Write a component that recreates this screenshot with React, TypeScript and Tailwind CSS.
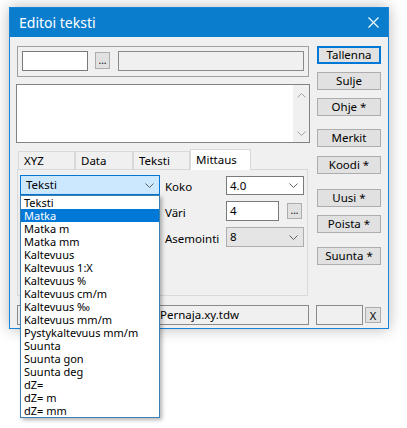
// Editoi teksti – dialog with dropdown open
const FONT = "font-['Noto_Sans',sans-serif]";

const listItems = [
    "Teksti",
    "Matka",
    "Matka m",
    "Matka mm",
    "Kaltevuus",
    "Kaltevuus 1:X",
    "Kaltevuus %",
    "Kaltevuus cm/m",
    "Kaltevuus ‰",
    "Kaltevuus mm/m",
    "Pystykaltevuus mm/m",
    "Suunta",
    "Suunta gon",
    "Suunta deg",
    "dZ=",
    "dZ= m",
    "dZ= mm",
];

function Chevron({ up = false, color = "#606060" }: { up?: boolean; color?: string }) {
    return (
        <svg width="9" height="5" viewBox="0 0 9 5" className="block">
            <polyline
                points={up ? "0.5,4.5 4.5,0.5 8.5,4.5" : "0.5,0.5 4.5,4.5 8.5,0.5"}
                fill="none"
                stroke={color}
                strokeWidth="1"
            />
        </svg>
    );
}

function SideButton({ label, mt, primary = false }: { label: string; mt: string; primary?: boolean }) {
    return (
        <div
            className={`${mt} h-[18px] w-[64px] flex items-center justify-center text-[11.5px] leading-none text-black bg-[#e1e1e1] ${
                primary ? "border-2 border-[#0078d7]" : "border border-[#adadad]"
            }`}
        >
            {label}
        </div>
    );
}

function Tab({ label, w, selected = false }: { label: string; w: string; selected?: boolean }) {
    return (
        <div
            className={`${w} flex border-t border-l border-r border-[#d9d9d9] text-[11.5px] leading-none pl-[5px] ${
                selected
                    ? "h-[21px] bg-white relative z-10 -mb-px items-start pt-[4px]"
                    : "h-[18px] bg-[#f0f0f0] items-end pb-[3px]"
            }`}
        >
            {label}
        </div>
    );
}

export default function App() {
    return (
        <div className={`relative w-[407px] h-[428px] bg-white overflow-hidden pt-[7px] pl-[9px] text-black ${FONT}`}>
            {/* Dialog */}
            <div className="w-[380px] h-[322px] flex flex-col border border-[#1883d7] bg-[#f0f0f0] shadow-[0_0_14px_rgba(0,0,0,0.28)]">
                {/* Title bar */}
                <div className="h-[29px] flex items-center justify-between bg-[#0b7dcd] pl-[9px] pr-[9px]">
                    <span className="text-[14px] text-white">Editoi teksti</span>
                    <svg width="11" height="11" viewBox="0 0 11 11">
                        <path d="M0.5 0.5 L10.5 10.5 M10.5 0.5 L0.5 10.5" stroke="white" strokeWidth="1.1" />
                    </svg>
                </div>

                {/* Body */}
                <div className="flex-1 flex flex-col pl-[7px] pt-[9px]">
                    <div className="flex h-[250px]">
                        {/* Left column */}
                        <div className="w-[293px] flex flex-col">
                            {/* Group box */}
                            <div className="h-[31px] w-[292px] border border-[#a0a0a0] flex items-start pt-[4px] pl-[4px]">
                                <div className="w-[66px] h-[20px] bg-white border border-[#7a7a7a]" />
                                <div className="ml-[7px] mt-[1px] w-[15px] h-[17px] bg-[#e1e1e1] border border-[#adadad] flex items-center justify-center text-[10px] leading-none pb-[2px]">
                                    ...
                                </div>
                                <div className="ml-[8px] w-[186px] h-[20px] bg-[#f0f0f0] border border-[#8a8a8a]" />
                            </div>

                            {/* Text area */}
                            <div className="mt-[7px] h-[59px] w-[294px] -ml-px bg-white border border-[#828282] flex justify-end">
                                <div className="w-[16px] bg-[#f0f0f0] flex flex-col items-center justify-between pt-[8px] pb-[6px]">
                                    <Chevron up color="#a3a3a3" />
                                    <Chevron color="#a3a3a3" />
                                </div>
                            </div>

                            {/* Tabs */}
                            <div className="mt-[6px] flex items-end pl-[1px]">
                                <Tab label="XYZ" w="w-[57px]" />
                                <Tab label="Data" w="w-[58px]" />
                                <Tab label="Teksti" w="w-[57px]" />
                                <Tab label="Mittaus" w="w-[61px]" selected />
                            </div>

                            {/* Tab panel */}
                            <div className="h-[127px] w-[291px] border border-[#d9d9d9] bg-[#f0f0f0] flex items-start pl-[2px] pt-[5px]">
                                <div className="w-[140px] h-[20px] border border-[#0078d7] bg-[#cce8ff] flex items-center justify-between pl-[5px] pr-[5px] text-[11.5px] leading-none">
                                    <span>Teksti</span>
                                    <Chevron />
                                </div>

                                <div className="ml-[5px] flex flex-col text-[11.5px] leading-none">
                                    <div className="mt-[1px] h-[19px] flex items-center">
                                        <span className="w-[61px] pt-[3px]">Koko</span>
                                        <div className="w-[78px] h-[19px] bg-white border border-[#7a7a7a] flex items-center justify-between pl-[3px] pr-[5px]">
                                            <span>4.0</span>
                                            <Chevron />
                                        </div>
                                    </div>
                                    <div className="mt-[6px] h-[20px] flex items-center">
                                        <span className="w-[61px] pt-[3px]">Väri</span>
                                        <div className="w-[53px] h-[20px] bg-white border border-[#7a7a7a] flex items-center pl-[3px]">
                                            4
                                        </div>
                                        <div className="ml-[8px] w-[15px] h-[16px] bg-[#e1e1e1] border border-[#adadad] flex items-center justify-center text-[10px] leading-none pb-[2px]">
                                            ...
                                        </div>
                                    </div>
                                    <div className="mt-[6px] h-[20px] flex items-center">
                                        <span className="w-[61px] pt-[3px]">Asemointi</span>
                                        <div className="w-[78px] h-[20px] bg-[#e5e5e5] border border-[#adadad] flex items-center justify-between pl-[3px] pr-[5px]">
                                            <span>8</span>
                                            <Chevron />
                                        </div>
                                    </div>
                                </div>
                            </div>
                        </div>

                        {/* Right column buttons */}
                        <div className="ml-[7px] w-[64px] flex flex-col">
                            <SideButton label="Tallenna" mt="mt-0" primary />
                            <SideButton label="Sulje" mt="mt-[8px]" />
                            <SideButton label="Ohje *" mt="mt-[8px]" />
                            <SideButton label="Merkit" mt="mt-[13px]" />
                            <SideButton label="Koodi *" mt="mt-[9px]" />
                            <SideButton label="Uusi *" mt="mt-[15px]" />
                            <SideButton label="Poista *" mt="mt-[8px]" />
                            <SideButton label="Suunta *" mt="mt-[14px]" />
                        </div>
                    </div>

                    {/* Bottom row */}
                    <div className="mt-[9px] h-[20px] flex items-start text-[11.5px] leading-none">
                        <div className="w-[292px] h-[20px] bg-[#f0f0f0] border border-[#8a8a8a] flex items-center pl-[143px]">
                            <span className="-ml-[1px]">Pernaja.xy.tdw</span>
                        </div>
                        <div className="ml-[7px] w-[47px] h-[20px] bg-[#f0f0f0] border border-[#8a8a8a]" />
                        <div className="ml-[2px] mt-[2px] w-[16px] h-[16px] bg-[#e1e1e1] border border-[#adadad] flex items-center justify-center text-[11px]">
                            X
                        </div>
                    </div>
                </div>
            </div>

            {/* Open dropdown list */}
            <div className="absolute left-[20px] top-[195px] w-[140px] bg-white border border-[#3c7fb1] shadow-[2px_2px_4px_rgba(0,0,0,0.3)] text-[11px]">
                {listItems.map((item, i) => (
                    <div
                        key={item}
                        className={`h-[13px] leading-[13px] pl-[3px] whitespace-nowrap ${
                            i === 1 ? "bg-[#0078d7] text-white" : ""
                        }`}
                    >
                        {item}
                    </div>
                ))}
            </div>
        </div>
    );
}
